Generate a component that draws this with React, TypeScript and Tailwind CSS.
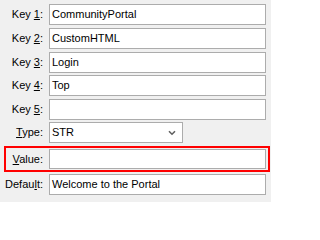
import React from "react";

const font = { fontFamily: '"Liberation Sans", Arial, sans-serif' };

function Label({ pre, u, post, w = "w-[43px]" }: { pre: string; u: string; post: string; w?: string }) {
  return (
    <div className={`${w} shrink-0 text-right text-[11px] leading-none text-[#000000]`}>
      {pre}
      <span className="underline underline-offset-[1px]">{u}</span>
      {post}
    </div>
  );
}

function TextBox({ value, h = "h-[21px]" }: { value: string; h?: string }) {
  return (
    <div className={`ml-[6px] flex ${h} w-[217px] items-center border border-[#acacac] bg-white pl-[2px] text-[11px] text-[#000000]`}>
      {value}
    </div>
  );
}

export default function App() {
  const keys = [
    { n: "1", v: "CommunityPortal" },
    { n: "2", v: "CustomHTML" },
    { n: "3", v: "Login" },
    { n: "4", v: "Top" },
    { n: "5", v: "" },
  ];
  return (
    <div className="h-[202px] w-[271px] bg-[#f0f0f0] pt-[4px]" style={font}>
      <div className="flex flex-col gap-[3px]">
        {keys.map((k) => (
          <div key={k.n} className={`flex items-center ${k.n === "4" ? "-mt-px" : ""}`}>
            <Label pre="Key " u={k.n} post=":" />
            <TextBox value={k.v} />
          </div>
        ))}
        <div className="-mt-px flex items-center">
          <Label pre="" u="T" post="ype:" />
          <div className="ml-[6px] flex h-[21px] w-[134px] items-center justify-between border border-[#acacac] bg-white pl-[2px] pr-[6px] text-[11px] text-[#000000]">
            <span>STR</span>
            <svg width="8" height="6" viewBox="0 0 8 6">
              <path d="M1 1.2 L4 4.2 L7 1.2" fill="none" stroke="#606060" strokeWidth="1.6" />
            </svg>
          </div>
        </div>
        <div className="ml-[4px] flex w-[266px] items-center border-2 border-[#ff0000] pb-[1px] pt-[1px]">
          <Label pre="" u="V" post="alue:" w="w-[37px]" />
          <TextBox value="" h="h-[20px]" />
        </div>
        <div className="-mt-px flex items-center">
          <Label pre="Defau" u="l" post="t:" />
          <TextBox value="Welcome to the Portal" />
        </div>
      </div>
    </div>
  );
}
